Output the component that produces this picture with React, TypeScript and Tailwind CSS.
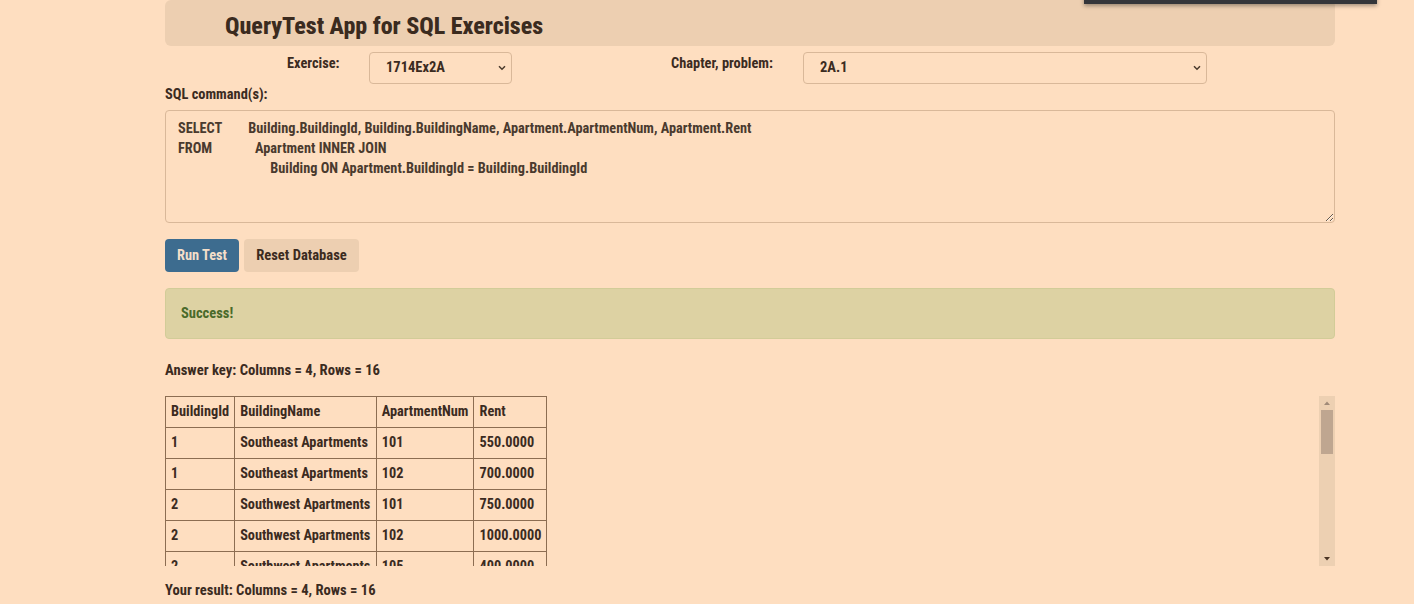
import React from "react";

const rows: [number, string, number, string][] = [
  [1, "Southeast Apartments", 101, "550.0000"],
  [1, "Southeast Apartments", 102, "700.0000"],
  [2, "Southwest Apartments", 101, "750.0000"],
  [2, "Southwest Apartments", 102, "1000.0000"],
  [2, "Southwest Apartments", 105, "400.0000"],
  [2, "Southwest Apartments", 106, "425.0000"],
  [3, "River View Apartments", 201, "800.0000"],
  [3, "River View Apartments", 202, "850.0000"],
  [3, "River View Apartments", 203, "900.0000"],
  [4, "Main Street Lofts", 1, "1200.0000"],
  [4, "Main Street Lofts", 2, "1250.0000"],
  [4, "Main Street Lofts", 3, "1300.0000"],
  [5, "Park Place", 10, "650.0000"],
  [5, "Park Place", 11, "675.0000"],
  [5, "Park Place", 12, "700.0000"],
  [5, "Park Place", 14, "725.0000"],
];

const Chevron = () => (
  <svg className="pointer-events-none absolute right-[6px] top-1/2 -translate-y-1/2" width="8" height="6" viewBox="0 0 8 6">
    <path d="M1 1.2 L4 4.2 L7 1.2" fill="none" stroke="#4a3a2c" strokeWidth="1.5" />
  </svg>
);

const App: React.FC = () => {
  return (
    <div className="relative min-h-[604px] bg-[#fedec0] font-bold text-[#3b2b1f] [font-family:Roboto,'Liberation_Sans',sans-serif] [font-stretch:75%]">
      <div className="absolute left-[1084px] top-[-20px] h-[24px] w-[293px] bg-[#33353a] shadow-[0_2px_4px_rgba(0,0,0,0.35)]" />

      <div className="ml-[165px] w-[1170px]">
        <div className="flex h-[46px] items-center rounded-[6px] bg-[#edcfb1] pl-[60px] pt-[6px]">
          <h1 className="text-[24px] font-extrabold leading-none">QueryTest App for SQL Exercises</h1>
        </div>

        <div className="mt-[6px] flex h-[32px] items-start">
          <label className="ml-[122px] mt-[1px] w-[82px] text-[14.4px]">Exercise:</label>
          <div className="relative">
            <select className="h-[32px] w-[143px] appearance-none rounded-[4px] border border-[#d9b899] bg-[#fedec0] pl-[16px] text-[14.5px] font-bold outline-none">
              <option>1714Ex2A</option>
            </select>
            <Chevron />
          </div>
          <label className="ml-[159px] mt-[1px] w-[132px] text-[14.4px]">Chapter, problem:</label>
          <div className="relative">
            <select className="h-[32px] w-[404px] appearance-none rounded-[4px] border border-[#d9b899] bg-[#fedec0] pl-[16px] text-[14.5px] font-bold outline-none">
              <option>2A.1</option>
            </select>
            <Chevron />
          </div>
        </div>

        <div className="mt-[1px] text-[14.4px] leading-[20px]">SQL command(s):</div>
        <textarea
          readOnly
          className="mt-[5px] block h-[113px] w-full resize-y rounded-[4px] border border-[#d9b899] bg-[#fedec0] px-[12px] py-[7px] text-[14.3px] font-bold leading-[20px] text-[#4a3a2e] outline-none"
          value={
            "SELECT        Building.BuildingId, Building.BuildingName, Apartment.ApartmentNum, Apartment.Rent\nFROM             Apartment INNER JOIN\n                            Building ON Apartment.BuildingId = Building.BuildingId"
          }
        />

        <div className="mt-[16px] flex gap-[5px]">
          <button className="h-[33px] w-[74px] rounded-[4px] bg-[#3d6c8f] text-[14.4px] text-[#f4dfca]">Run Test</button>
          <button className="h-[33px] w-[115px] rounded-[4px] bg-[#edcfb1] text-[14.6px] text-[#3b2b1f]">Reset Database</button>
        </div>

        <div className="mt-[16px] flex h-[51px] items-center rounded-[4px] border border-[#d2cc98] bg-[#ddd2a3] px-[15px] text-[14.5px] text-[#4a6a2a]">
          Success!
        </div>

        <div className="mt-[21px] text-[14.7px] leading-[20px]">Answer key: Columns = 4, Rows = 16</div>

        <div className="mt-[16px] flex h-[170px]">
          <div className="flex-1 overflow-hidden">
            <table className="border-collapse text-[14.3px]">
              <thead>
                <tr className="h-[31px]">
                  {["BuildingId", "BuildingName", "ApartmentNum", "Rent"].map((h) => (
                    <th key={h} className="border border-[#8c6d52] px-[5px] text-left font-bold">{h}</th>
                  ))}
                </tr>
              </thead>
              <tbody>
                {rows.map((r, i) => (
                  <tr key={i} className="h-[31px]">
                    {r.map((c, j) => (
                      <td key={j} className="border border-[#8c6d52] px-[5px]">{c}</td>
                    ))}
                  </tr>
                ))}
              </tbody>
            </table>
          </div>
          <div className="flex w-[16px] flex-col items-center bg-[#edd0b2] px-[2px]">
            <svg width="8" height="14" viewBox="0 0 8 14" className="shrink-0">
              <path d="M1 9 L4 5.5 L7 9 Z" fill="#a08a78" />
            </svg>
            <div className="h-[44px] w-[12px] shrink-0 bg-[#bfa690]" />
            <div className="flex-1" />
            <svg width="8" height="14" viewBox="0 0 8 14" className="shrink-0">
              <path d="M1 5 L4 8.5 L7 5 Z" fill="#4a3424" />
            </svg>
          </div>
        </div>

        <div className="mt-[14px] text-[14.6px] leading-[20px]">Your result: Columns = 4, Rows = 16</div>
      </div>
    </div>
  );
};

export default App;
